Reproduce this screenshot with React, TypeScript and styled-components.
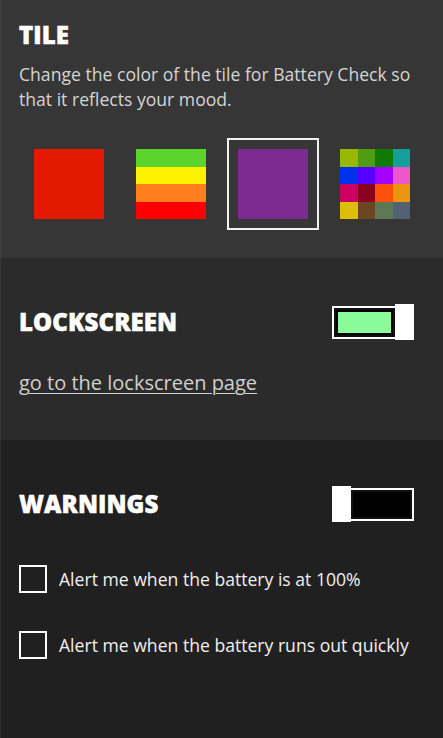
import styled, { createGlobalStyle } from 'styled-components';

const GlobalStyle = createGlobalStyle`
  html, body {
    margin: 0;
    padding: 0;
    background: #1f1f1f;
  }
  * {
    box-sizing: border-box;
  }
`;

const Page = styled.div`
  width: 443px;
  height: 738px;
  display: flex;
  flex-direction: column;
  font-family: 'Open Sans', 'Noto Sans', sans-serif;
  color: #fff;
`;

const Section = styled.section<{ $bg: string; $height?: number; $top: number }>`
  background: ${(p) => p.$bg};
  ${(p) => (p.$height ? `height: ${p.$height}px;` : 'flex: 1;')}
  padding: ${(p) => p.$top}px 19px 0 18px;
  border-left: 1px solid rgba(255, 255, 255, 0.06);
`;

const Title = styled.h2`
  margin: 0;
  font-size: 24px;
  font-weight: 800;
  line-height: 30px;
  letter-spacing: 0.1px;
  -webkit-text-stroke: 0.5px #fff;
`;

const Description = styled.p`
  margin: 12px 0 0;
  font-size: 17.6px;
  line-height: 25px;
  color: #d4d4d4;
`;

const SwatchRow = styled.div`
  display: flex;
  gap: 10px;
  margin: 26px 0 0 4px;
`;

const SwatchSlot = styled.div<{ $selected?: boolean }>`
  width: 92px;
  height: 92px;
  padding: 9px;
  border: 2px solid ${(p) => (p.$selected ? '#f2f2f2' : 'transparent')};
`;

const SolidSwatch = styled.div<{ $color: string }>`
  width: 70px;
  height: 70px;
  background: ${(p) => p.$color};
`;

const StripeSwatch = styled.div`
  width: 70px;
  height: 70px;
  display: flex;
  flex-direction: column;
`;

const Stripe = styled.div<{ $color: string }>`
  flex: 1;
  background: ${(p) => p.$color};
`;

const GridSwatch = styled.div`
  width: 70px;
  height: 70px;
  display: grid;
  grid-template-columns: repeat(4, 1fr);
  grid-template-rows: repeat(4, 1fr);
`;

const Cell = styled.div<{ $color: string }>`
  background: ${(p) => p.$color};
`;

const HeaderRow = styled.div`
  display: flex;
  align-items: center;
  justify-content: space-between;
  padding-right: 10px;
`;

const Toggle = styled.div<{ $on: boolean }>`
  display: flex;
  align-items: center;
  flex-direction: ${(p) => (p.$on ? 'row' : 'row-reverse')};
  height: 36px;
`;

const Track = styled.div<{ $on: boolean }>`
  width: 63px;
  height: 33px;
  border: 2px solid #fff;
  ${(p) => (p.$on ? 'border-right: none;' : 'border-left: none;')}
  padding: 2px;
  background: #111;
`;

const TrackFill = styled.div<{ $on: boolean }>`
  height: 100%;
  border: 2px solid #000;
  background: ${(p) => (p.$on ? '#8bfb99' : '#000')};
`;

const Thumb = styled.div`
  width: 19px;
  height: 36px;
  background: #fff;
`;

const PageLink = styled.a`
  display: inline-block;
  margin-top: 29px;
  font-size: 20px;
  line-height: 28px;
  color: #d0d0d0;
  text-decoration: underline;
  text-underline-offset: 3px;
  text-decoration-thickness: 1px;
`;

const CheckList = styled.div`
  display: flex;
  flex-direction: column;
  gap: 38px;
  margin-top: 43px;
`;

const CheckRow = styled.label`
  display: flex;
  align-items: center;
  gap: 12px;
  font-size: 17.6px;
  color: #f0f0f0;
`;

const Box = styled.span`
  width: 28px;
  height: 28px;
  border: 2px solid #fff;
  flex-shrink: 0;
`;

const stripes = ['#5bd42d', '#fff200', '#ff7f1f', '#ff0000'];

const gridColors = [
  '#97b800', '#519d12', '#117a00', '#149f9a',
  '#0032ee', '#5400ff', '#a400ff', '#ef56cb',
  '#cc005f', '#8a001f', '#fa500a', '#ed9410',
  '#dcbf0a', '#6c4620', '#5e7755', '#526174',
];

const ToggleSwitch = ({ on }: { on: boolean }) => (
  <Toggle $on={on}>
    <Track $on={on}>
      <TrackFill $on={on} />
    </Track>
    <Thumb />
  </Toggle>
);

export default function App() {
  return (
    <>
      <GlobalStyle />
      <Page>
        <Section $bg="#363636" $height={258} $top={20}>
          <Title>TILE</Title>
          <Description>
            Change the color of the tile for Battery Check so that it reflects your mood.
          </Description>
          <SwatchRow>
            <SwatchSlot>
              <SolidSwatch $color="#e31a00" />
            </SwatchSlot>
            <SwatchSlot>
              <StripeSwatch>
                {stripes.map((c) => (
                  <Stripe key={c} $color={c} />
                ))}
              </StripeSwatch>
            </SwatchSlot>
            <SwatchSlot $selected>
              <SolidSwatch $color="#7b2b91" />
            </SwatchSlot>
            <SwatchSlot>
              <GridSwatch>
                {gridColors.map((c) => (
                  <Cell key={c} $color={c} />
                ))}
              </GridSwatch>
            </SwatchSlot>
          </SwatchRow>
        </Section>

        <Section $bg="#2b2b2b" $height={182} $top={46}>
          <HeaderRow>
            <Title>LOCKSCREEN</Title>
            <ToggleSwitch on />
          </HeaderRow>
          <PageLink href="#">go to the lockscreen page</PageLink>
        </Section>

        <Section $bg="#202020" $top={46}>
          <HeaderRow>
            <Title>WARNINGS</Title>
            <ToggleSwitch on={false} />
          </HeaderRow>
          <CheckList>
            <CheckRow>
              <Box />
              Alert me when the battery is at 100%
            </CheckRow>
            <CheckRow>
              <Box />
              Alert me when the battery runs out quickly
            </CheckRow>
          </CheckList>
        </Section>
      </Page>
    </>
  );
}
